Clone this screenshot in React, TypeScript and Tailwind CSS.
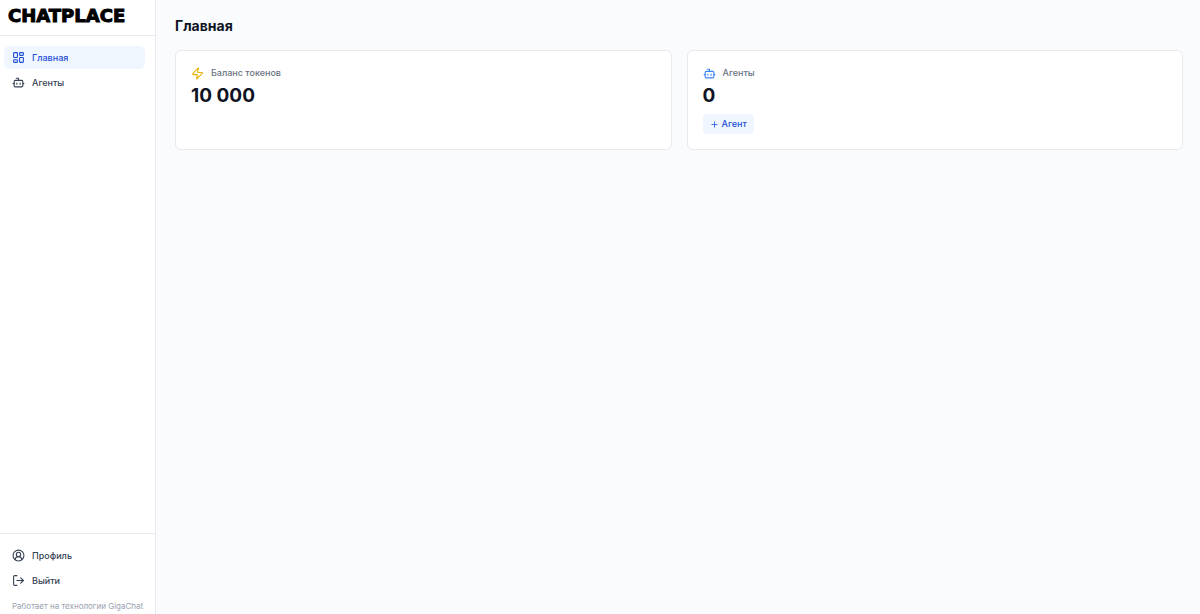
import React from "react";
import { Bot, CircleUserRound, LayoutDashboard, LogOut, Plus, Zap } from "lucide-react";
import type { LucideIcon } from "lucide-react";

interface NavItem {
  label: string;
  icon: LucideIcon;
  active?: boolean;
}

const mainNav: NavItem[] = [
  { label: "Главная", icon: LayoutDashboard, active: true },
  { label: "Агенты", icon: Bot },
];

const accountNav: NavItem[] = [
  { label: "Профиль", icon: CircleUserRound },
  { label: "Выйти", icon: LogOut },
];

const NavLink: React.FC<{ item: NavItem }> = ({ item }) => {
  const Icon = item.icon;
  return (
    <a
      href="#"
      aria-current={item.active ? "page" : undefined}
      className={`flex h-[23px] items-center gap-[7px] rounded-md px-2 text-[9px] font-medium ${
        item.active ? "bg-[#eff6ff] text-[#1d4ed8]" : "text-gray-700 hover:bg-gray-50"
      }`}
    >
      <Icon className="size-[13px] shrink-0" />
      {item.label}
    </a>
  );
};

const Sidebar: React.FC = () => (
  <aside className="flex w-[156px] shrink-0 flex-col border-r border-[#e8eaef] bg-white">
    <div className="flex h-9 items-center border-b border-[#e8eaef] px-2 pb-[3px]">
      <a
        href="#"
        className="font-['DejaVu_Sans',sans-serif] text-[18px] leading-none font-bold text-black [-webkit-text-stroke:1px_black]"
      >
        CHATPLACE
      </a>
    </div>
    <nav className="flex flex-1 flex-col gap-0.5 py-2.5 pr-2.5 pl-1">
      {mainNav.map((item) => (
        <NavLink key={item.label} item={item} />
      ))}
    </nav>
    <div className="border-t border-[#e8eaef] pt-2.5 pr-2.5 pl-1">
      <div className="flex flex-col gap-0.5">
        {accountNav.map((item) => (
          <NavLink key={item.label} item={item} />
        ))}
      </div>
      <p className="mt-2 px-2 pb-0.5 text-[8px] leading-3 whitespace-nowrap text-gray-400">
        Работает на технологии GigaChat
      </p>
    </div>
  </aside>
);

const StatCard: React.FC<{
  label: string;
  value: string;
  icon: React.ReactNode;
  children?: React.ReactNode;
}> = ({ label, value, icon, children }) => (
  <section className="min-h-[100px] rounded-md border border-[#e8eaef] bg-white p-[15px]">
    <h2 className="flex h-3.5 items-center gap-[7px] text-[9px] font-medium text-gray-500">
      {icon}
      {label}
    </h2>
    <p className="mt-1 text-[19px] leading-6 font-bold text-[#0f1424]">{value}</p>
    {children}
  </section>
);

export default function App() {
  return (
    <div className="flex min-h-screen bg-[#fafbfd] font-['Inter',sans-serif]">
      <Sidebar />
      <main className="flex-1 pt-4 pr-[17px] pl-[19px]">
        <h1 className="text-[14px] leading-5 font-bold text-[#0f1424]">Главная</h1>
        <div className="mt-[14px] grid grid-cols-2 gap-[15px]">
          <StatCard
            label="Баланс токенов"
            value="10 000"
            icon={<Zap className="size-[13px] text-[#eab308]" />}
          />
          <StatCard
            label="Агенты"
            value="0"
            icon={<Bot className="size-[13px] text-[#3b82f6]" />}
          >
            <button
              type="button"
              className="mt-1.5 flex h-5 items-center gap-[3px] rounded-sm bg-[#eff6ff] px-[7px] text-[9px] font-medium text-[#1d4ed8]"
            >
              <Plus className="size-[9px]" />
              Агент
            </button>
          </StatCard>
        </div>
      </main>
    </div>
  );
}
